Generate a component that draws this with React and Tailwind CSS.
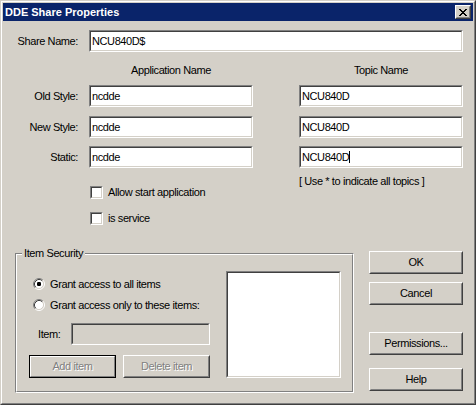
import React from "react";

const sunkenOuter = "border border-t-[#808080] border-l-[#808080] border-b-white border-r-white";
const sunkenInner = "border border-t-[#404040] border-l-[#404040] border-b-[#d4d0c8] border-r-[#d4d0c8]";

function Field({ w, value, disabled, caret }) {
  return (
    <div className={`${w} h-[22px] ${sunkenOuter}`}>
      <div className={`h-full ${sunkenInner} ${disabled ? "bg-[#d4d0c8]" : "bg-white"} flex items-center pl-[1px] whitespace-nowrap`}>
        <span>{value}</span>
        {caret && <span className="w-px h-[12px] bg-black" />}
      </div>
    </div>
  );
}

function Btn({ className, children, disabled, def }) {
  const label = (
    <span className={disabled ? "text-[#808080] [text-shadow:1px_1px_0_#fff]" : ""}>{children}</span>
  );
  if (def) {
    return (
      <div className={`${className} h-[23px] border border-black`}>
        <div className="h-full border border-t-white border-l-white border-b-[#808080] border-r-[#808080] flex items-center justify-center">
          {label}
        </div>
      </div>
    );
  }
  return (
    <div className={`${className} h-[23px] border border-t-white border-l-white border-b-[#404040] border-r-[#404040]`}>
      <div className="h-full border border-t-[#d4d0c8] border-l-[#d4d0c8] border-b-[#808080] border-r-[#808080] flex items-center justify-center">
        {label}
      </div>
    </div>
  );
}

function Check({ label }) {
  return (
    <div className="flex items-center h-[13px] gap-[5px]">
      <div className={`w-[13px] h-[13px] shrink-0 ${sunkenOuter}`}>
        <div className={`h-full ${sunkenInner} bg-white`} />
      </div>
      <span className="whitespace-nowrap">{label}</span>
    </div>
  );
}

function Radio({ checked, label }) {
  return (
    <div className="flex items-center h-[12px] gap-[5px]">
      <svg width="12" height="12" viewBox="0 0 12 12" className="shrink-0">
        <circle cx="6" cy="6" r="4.5" fill="#fff" />
        <path d="M2.11 9.89 A5.5 5.5 0 0 1 9.89 2.11" stroke="#808080" strokeWidth="1" fill="none" />
        <path d="M9.89 2.11 A5.5 5.5 0 0 1 2.11 9.89" stroke="#ffffff" strokeWidth="1" fill="none" />
        <path d="M2.82 9.18 A4.5 4.5 0 0 1 9.18 2.82" stroke="#404040" strokeWidth="1" fill="none" />
        <path d="M9.18 2.82 A4.5 4.5 0 0 1 2.82 9.18" stroke="#d4d0c8" strokeWidth="1" fill="none" />
        {checked && <rect x="4" y="4" width="4" height="4" rx="1.2" fill="#000" />}
      </svg>
      <span className="whitespace-nowrap">{label}</span>
    </div>
  );
}

function CloseX() {
  const rows = [
    "11000011",
    "01100110",
    "00111100",
    "00011000",
    "00111100",
    "01100110",
    "11000011",
  ];
  const rects = [];
  rows.forEach((r, y) =>
    r.split("").forEach((c, x) => {
      if (c === "1") rects.push(<rect key={`${x}-${y}`} x={x} y={y} width="1" height="1" fill="#000" />);
    })
  );
  return (
    <svg width="8" height="7" viewBox="0 0 8 7" shapeRendering="crispEdges">
      {rects}
    </svg>
  );
}

export default function App() {
  return (
    <div className="w-[476px] h-[405px] font-['Liberation_Sans',Arial,sans-serif] text-[11px] leading-[13px] tracking-[-0.4px] text-black select-none">
      <div className="h-full border border-t-[#d4d0c8] border-l-[#d4d0c8] border-b-[#404040] border-r-[#404040]">
        <div className="h-full border border-t-white border-l-white border-b-[#808080] border-r-[#808080] bg-[#d4d0c8] p-px flex flex-col">
          {/* Title bar */}
          <div className="h-[18px] bg-[#0a246a] flex items-center justify-between pl-[2px] pr-[2px] shrink-0">
            <span className="text-white font-bold tracking-normal text-[11px]">DDE Share Properties</span>
            <div className="w-[16px] h-[14px] border border-t-white border-l-white border-b-[#404040] border-r-[#404040]">
              <div className="h-full border border-t-[#d4d0c8] border-l-[#d4d0c8] border-b-[#808080] border-r-[#808080] bg-[#d4d0c8] flex items-center justify-center">
                <CloseX />
              </div>
            </div>
          </div>

          {/* Content */}
          <div className="flex-1 flex flex-col pt-[9px]">
            <div className="flex items-center">
              <div className="w-[75px] text-right">Share Name:</div>
              <div className="ml-[11px]">
                <Field w="w-[374px]" value="NCU840D$" />
              </div>
            </div>

            <div className="mt-[12px] h-[13px] flex">
              <div className="w-[86px]" />
              <div className="w-[164px] text-center">Application Name</div>
              <div className="ml-[46px] w-[164px] text-center">Topic Name</div>
            </div>

            <div className="mt-[8px] flex items-center">
              <div className="w-[75px] text-right">Old Style:</div>
              <div className="ml-[11px]"><Field w="w-[164px]" value="ncdde" /></div>
              <div className="ml-[46px]"><Field w="w-[164px]" value="NCU840D" /></div>
            </div>
            <div className="mt-[9px] flex items-center">
              <div className="w-[75px] text-right">New Style:</div>
              <div className="ml-[11px]"><Field w="w-[164px]" value="ncdde" /></div>
              <div className="ml-[46px]"><Field w="w-[164px]" value="NCU840D" /></div>
            </div>
            <div className="mt-[8px] flex items-center">
              <div className="w-[75px] text-right">Static:</div>
              <div className="ml-[11px]"><Field w="w-[164px]" value="ncdde" /></div>
              <div className="ml-[46px]"><Field w="w-[164px]" value="NCU840D" caret /></div>
            </div>

            <div className="flex">
              <div className="ml-[87px] w-[209px] pt-[18px] flex flex-col gap-[13px]">
                <Check label="Allow start application" />
                <Check label="is service" />
              </div>
              <div className="pt-[7px] whitespace-nowrap">[ Use * to indicate all topics ]</div>
            </div>

            {/* Bottom section */}
            <div className="mt-[26px] flex items-start pl-[12px]">
              <div className="relative mt-[2px] w-[339px] h-[140px] border border-t-[#808080] border-l-[#808080] border-b-white border-r-white">
                <span className="absolute left-[6px] top-[-7px] px-[2px] bg-[#d4d0c8] leading-[13px] whitespace-nowrap">Item Security</span>
                <div className="h-full border border-t-white border-l-white border-b-[#808080] border-r-[#808080] pl-[12px] pt-[16px] flex items-start">
                  <div className="w-[181px] pt-[7px] flex flex-col">
                    <div className="pl-[4px]"><Radio checked label="Grant access to all items" /></div>
                    <div className="pl-[4px] mt-[9px]"><Radio label="Grant access only to these items:" /></div>
                    <div className="mt-[12px] flex items-center">
                      <div className="w-[42px] pl-[9px]">Item:</div>
                      <Field w="w-[140px]" value="" disabled />
                    </div>
                    <div className="mt-[10px] flex gap-[7px]">
                      <Btn className="w-[87px]" disabled def>Add item</Btn>
                      <Btn className="w-[87px]" disabled>Delete item</Btn>
                    </div>
                  </div>
                  <div className={`ml-[16px] w-[115px] h-[107px] ${sunkenOuter}`}>
                    <div className={`h-full ${sunkenInner} bg-white`} />
                  </div>
                </div>
              </div>

              <div className="ml-[15px] w-[94px] flex flex-col">
                <Btn className="w-[94px]">OK</Btn>
                <div className="mt-[8px]"><Btn className="w-[94px]">Cancel</Btn></div>
                <div className="mt-[27px]"><Btn className="w-[94px]">Permissions...</Btn></div>
                <div className="mt-[13px]"><Btn className="w-[94px]">Help</Btn></div>
              </div>
            </div>
          </div>
        </div>
      </div>
    </div>
  );
}
